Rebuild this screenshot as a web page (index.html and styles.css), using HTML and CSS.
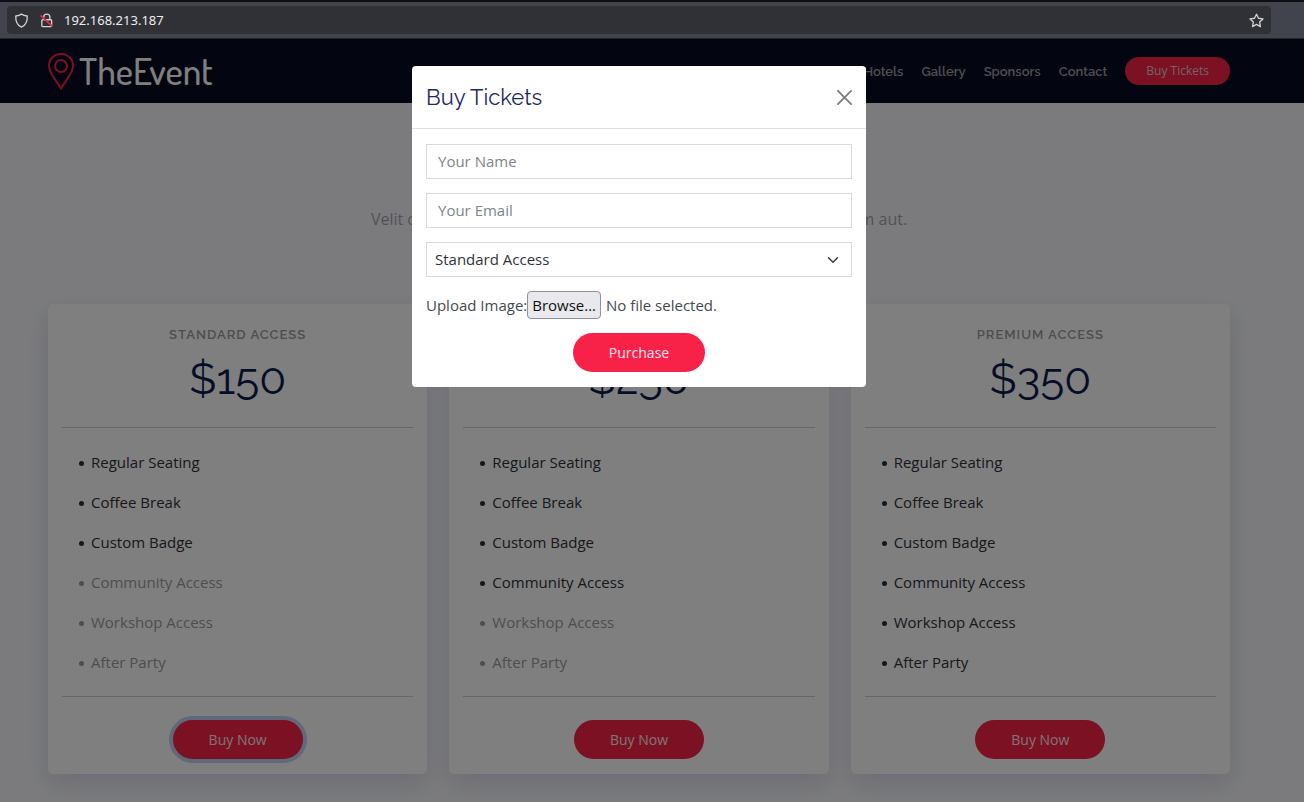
FILE: index.html
```html
<!DOCTYPE html>
<html lang="en">
<head>
<meta charset="utf-8">
<title>TheEvent</title>
<link rel="stylesheet" href="styles.css">
</head>
<body>
<div class="toolbar">
  <div class="urlbar">
    <svg class="tool-icon" viewBox="0 0 16 16" aria-hidden="true"><path d="M8 1.2 C6.3 2.4 4.2 3 1.9 3.2 C1.6 8.8 3.2 13 8 15 C12.8 13 14.4 8.8 14.1 3.2 C11.8 3 9.7 2.4 8 1.2 Z"/></svg>
    <svg class="tool-icon" viewBox="0 0 16 16" aria-hidden="true"><path d="M5 7 V4.4 a3.3 3.3 0 0 1 6.600 0 V7 M4 7.200 H12.500 a1 1 0 0 1 1 1 V13.500 a1 1 0 0 1 -1 1 H4 a1 1 0 0 1 -1 -1 V8.200 a1 1 0 0 1 1 -1 Z"/><path class="slash" d="M1.500 2.500 L14 14"/></svg>
    <input class="address" type="text" value="192.168.213.187" aria-label="Address">
    <button class="icon-button" type="button" aria-label="Bookmark"><svg class="tool-icon" viewBox="0 0 16 16" aria-hidden="true"><path d="M8 1.300 L10.100 5.600 L14.900 6.300 L11.400 9.700 L12.200 14.500 L8 12.200 L3.800 14.500 L4.600 9.700 L1.100 6.300 L5.900 5.600 Z"/></svg></button>
  </div>
</div>
<div class="page">
  <header class="site-header">
    <a class="logo" href="#">
      <svg class="pin" viewBox="0 0 26 37" aria-hidden="true"><path d="M13 1 C6 1 1 6.300 1 13 C1 20 7 25.500 13 35.500 C19 25.500 25 20 25 13 C25 6.300 20 1 13 1 Z"/><circle cx="13" cy="13" r="6"/></svg>
      <span>TheEvent</span>
    </a>
    <nav class="nav">
      <a href="#">Hotels</a>
      <a href="#">Gallery</a>
      <a href="#">Sponsors</a>
      <a href="#">Contact</a>
      <a class="nav-buy" href="#">Buy Tickets</a>
    </nav>
  </header>
  <main class="tickets">
    <p class="intro">Velit consequatur consequatur inventore iste fugit unde omnis eum aut.</p>
    <div class="cards">
      <section class="card">
        <h5>Standard Access</h5>
        <h6>$150</h6>
        <ul>
          <li>Regular Seating</li>
          <li>Coffee Break</li>
          <li>Custom Badge</li>
          <li class="muted">Community Access</li>
          <li class="muted">Workshop Access</li>
          <li class="muted">After Party</li>
        </ul>
        <button class="pill focused" type="button">Buy Now</button>
      </section>
      <section class="card">
        <h5>Pro Access</h5>
        <h6>$250</h6>
        <ul>
          <li>Regular Seating</li>
          <li>Coffee Break</li>
          <li>Custom Badge</li>
          <li>Community Access</li>
          <li class="muted">Workshop Access</li>
          <li class="muted">After Party</li>
        </ul>
        <button class="pill" type="button">Buy Now</button>
      </section>
      <section class="card">
        <h5>Premium Access</h5>
        <h6>$350</h6>
        <ul>
          <li>Regular Seating</li>
          <li>Coffee Break</li>
          <li>Custom Badge</li>
          <li>Community Access</li>
          <li>Workshop Access</li>
          <li>After Party</li>
        </ul>
        <button class="pill" type="button">Buy Now</button>
      </section>
    </div>
  </main>
  <div class="backdrop">
    <div class="modal" role="dialog" aria-labelledby="modal-title">
      <div class="modal-header">
        <h4 id="modal-title">Buy Tickets</h4>
        <button class="close" type="button" aria-label="Close"><svg viewBox="0 0 16 16" aria-hidden="true"><path d="M1 1 L15 15 M15 1 L1 15"/></svg></button>
      </div>
      <form class="modal-body">
        <input class="field" type="text" placeholder="Your Name" aria-label="Your Name">
        <input class="field" type="email" placeholder="Your Email" aria-label="Your Email">
        <div class="select-wrap">
          <select class="field" aria-label="Ticket type">
            <option>Standard Access</option>
            <option>Pro Access</option>
            <option>Premium Access</option>
          </select>
          <svg class="chevron" viewBox="0 0 16 16" aria-hidden="true"><path d="M2 5 L8 11 L14 5"/></svg>
        </div>
        <div class="upload">
          <label for="image">Upload Image:</label>
          <div class="file">
            <span class="browse">Browse…</span>
            <span>No file selected.</span>
            <input id="image" type="file">
          </div>
        </div>
        <button class="pill" type="submit">Purchase</button>
      </form>
    </div>
  </div>
</div>
</body>
</html>
```

FILE: styles.css
```css
* { box-sizing: border-box; }
html, body { height: 100%; }
body {
  margin: 0;
  display: flex;
  flex-direction: column;
  font-family: "Open Sans", sans-serif;
  font-size: 15px;
  color: #2f3138;
}
button, input, select { font: inherit; }
a { text-decoration: none; }

.toolbar {
  background: #42444d;
  border-top: 2px solid #0e0e12;
  border-bottom: 1px solid #25262c;
  padding: 4px 33px 4px 7px;
}
.urlbar {
  display: flex;
  align-items: center;
  height: 28px;
  padding: 0 7px;
  gap: 10px;
  border-radius: 4px;
  background: #303136;
}
.tool-icon {
  display: block;
  width: 15px;
  height: 15px;
  flex: none;
  fill: none;
  stroke: #d2d2d4;
  stroke-width: 1.4;
  stroke-linejoin: round;
}
.tool-icon .slash { stroke: #e22850; stroke-width: 2; }
.address {
  flex: 1;
  min-width: 0;
  border: 0;
  padding: 0;
  background: none;
  color: #ececee;
  font-family: "Noto Sans", sans-serif;
  font-size: 13px;
  outline: none;
}
.icon-button { border: 0; padding: 0; background: none; }

.page {
  position: relative;
  flex: 1;
  overflow: hidden;
  background: #f6f7fb;
}
.site-header {
  display: flex;
  align-items: center;
  justify-content: space-between;
  height: 64px;
  padding: 0 74px 0 48px;
  background: #060b20;
}
.logo {
  display: flex;
  align-items: center;
  gap: 5px;
  font-family: "Dosis", "Lato", sans-serif;
  font-size: 37px;
  font-weight: 500;
  line-height: 40px;
  color: #fff;
}
.pin {
  width: 26px;
  height: 37px;
  fill: none;
  stroke: #f82249;
  stroke-width: 2;
}
.nav {
  display: flex;
  align-items: center;
  gap: 18px;
  font-family: "Raleway", "Lato", sans-serif;
  font-size: 13px;
  font-weight: 600;
}
.nav a { color: #9b9ca6; }
.nav .nav-buy {
  padding: 0 21px;
  border-radius: 14px;
  background: #f82249;
  color: #e9c6cc;
  font-family: "Open Sans", sans-serif;
  font-size: 12px;
  font-weight: 400;
  line-height: 28px;
}

.tickets { padding: 104px 74px 0 48px; }
.intro {
  margin: 0 0 72px;
  font-size: 16px;
  line-height: 25px;
  text-align: center;
  color: #a4a5ad;
}
.cards {
  display: grid;
  grid-template-columns: repeat(3, 1fr);
  gap: 22px;
}
.card {
  display: flex;
  flex-direction: column;
  align-items: center;
  padding: 20px 14px 15px;
  border-radius: 5px;
  background: #fff;
  box-shadow: 0 9px 23px rgba(6, 12, 94, 0.12);
}
.card h5, .card h6 {
  margin: 0;
  font-family: "Raleway", "Lato", sans-serif;
}
.card h5 {
  font-size: 13px;
  font-weight: 600;
  line-height: 22px;
  letter-spacing: 1px;
  text-transform: uppercase;
  color: #9b9c9f;
}
.card h6 {
  font-size: 44px;
  font-weight: 400;
  line-height: 66px;
  color: #0e1b4d;
}
.card ul {
  align-self: stretch;
  margin: 15px 0 23px;
  padding: 14px 0 14px 17px;
  border: solid #cfcfcf;
  border-width: 1px 0;
  list-style: none;
}
.card li {
  display: flex;
  align-items: center;
  gap: 7px;
  line-height: 40px;
  color: #2f3138;
}
.card li::before {
  content: "";
  width: 5px;
  height: 5px;
  margin-top: 3px;
  border-radius: 50%;
  background: currentColor;
}
.card .muted { color: #9b9c9f; }
.pill {
  height: 39px;
  padding: 0 36px;
  border: 0;
  border-radius: 20px;
  background: #f82249;
  color: #ffe6ea;
  font-size: 14px;
}
.focused { box-shadow: 0 0 0 4px #bfd2f3; }

.backdrop {
  position: absolute;
  inset: 0;
  display: flex;
  align-items: flex-start;
  justify-content: center;
  padding: 27px 26px 0 0;
  background: rgba(0, 0, 0, 0.5);
}
.modal {
  width: 454px;
  max-width: 100%;
  border-radius: 4px;
  background: #fff;
}
.modal-header {
  display: flex;
  align-items: center;
  justify-content: space-between;
  padding: 16px 14px;
  border-bottom: 1px solid #dee2e6;
}
.modal h4 {
  margin: 0;
  font-family: "Raleway", "Lato", sans-serif;
  font-size: 22px;
  font-weight: 400;
  line-height: 30px;
  color: #1d2b63;
}
.close {
  display: flex;
  padding: 0;
  border: 0;
  background: none;
}
.close svg {
  width: 15px;
  height: 15px;
  fill: none;
  stroke: #7f7f7f;
  stroke-width: 2;
  stroke-linecap: round;
}
.modal-body {
  display: flex;
  flex-direction: column;
  gap: 14px;
  padding: 15px 14px;
}
.modal-body .pill { align-self: center; }
.field {
  display: block;
  width: 100%;
  height: 35px;
  padding: 0 11px 2px;
  border: 1px solid #d5dade;
  border-radius: 0;
  background: #fff;
  color: #2f3439;
}
.field::placeholder { color: #7d848b; opacity: 1; }
select.field { appearance: none; padding: 0 8px 2px; }
.select-wrap { position: relative; }
.chevron {
  position: absolute;
  top: 12px;
  right: 13px;
  width: 12px;
  height: 12px;
  fill: none;
  stroke: #343a40;
  stroke-width: 2;
  stroke-linecap: round;
  stroke-linejoin: round;
  pointer-events: none;
}
.upload { display: flex; align-items: center; color: #444a50; }
.file { position: relative; display: flex; align-items: center; gap: 5px; }
.file input { position: absolute; inset: 0; width: 100%; opacity: 0; }
.browse {
  padding: 0 4px;
  border: 1px solid #8f8f9d;
  border-radius: 4px;
  background: #e9e9ed;
  color: #111;
  line-height: 26px;
}
```
